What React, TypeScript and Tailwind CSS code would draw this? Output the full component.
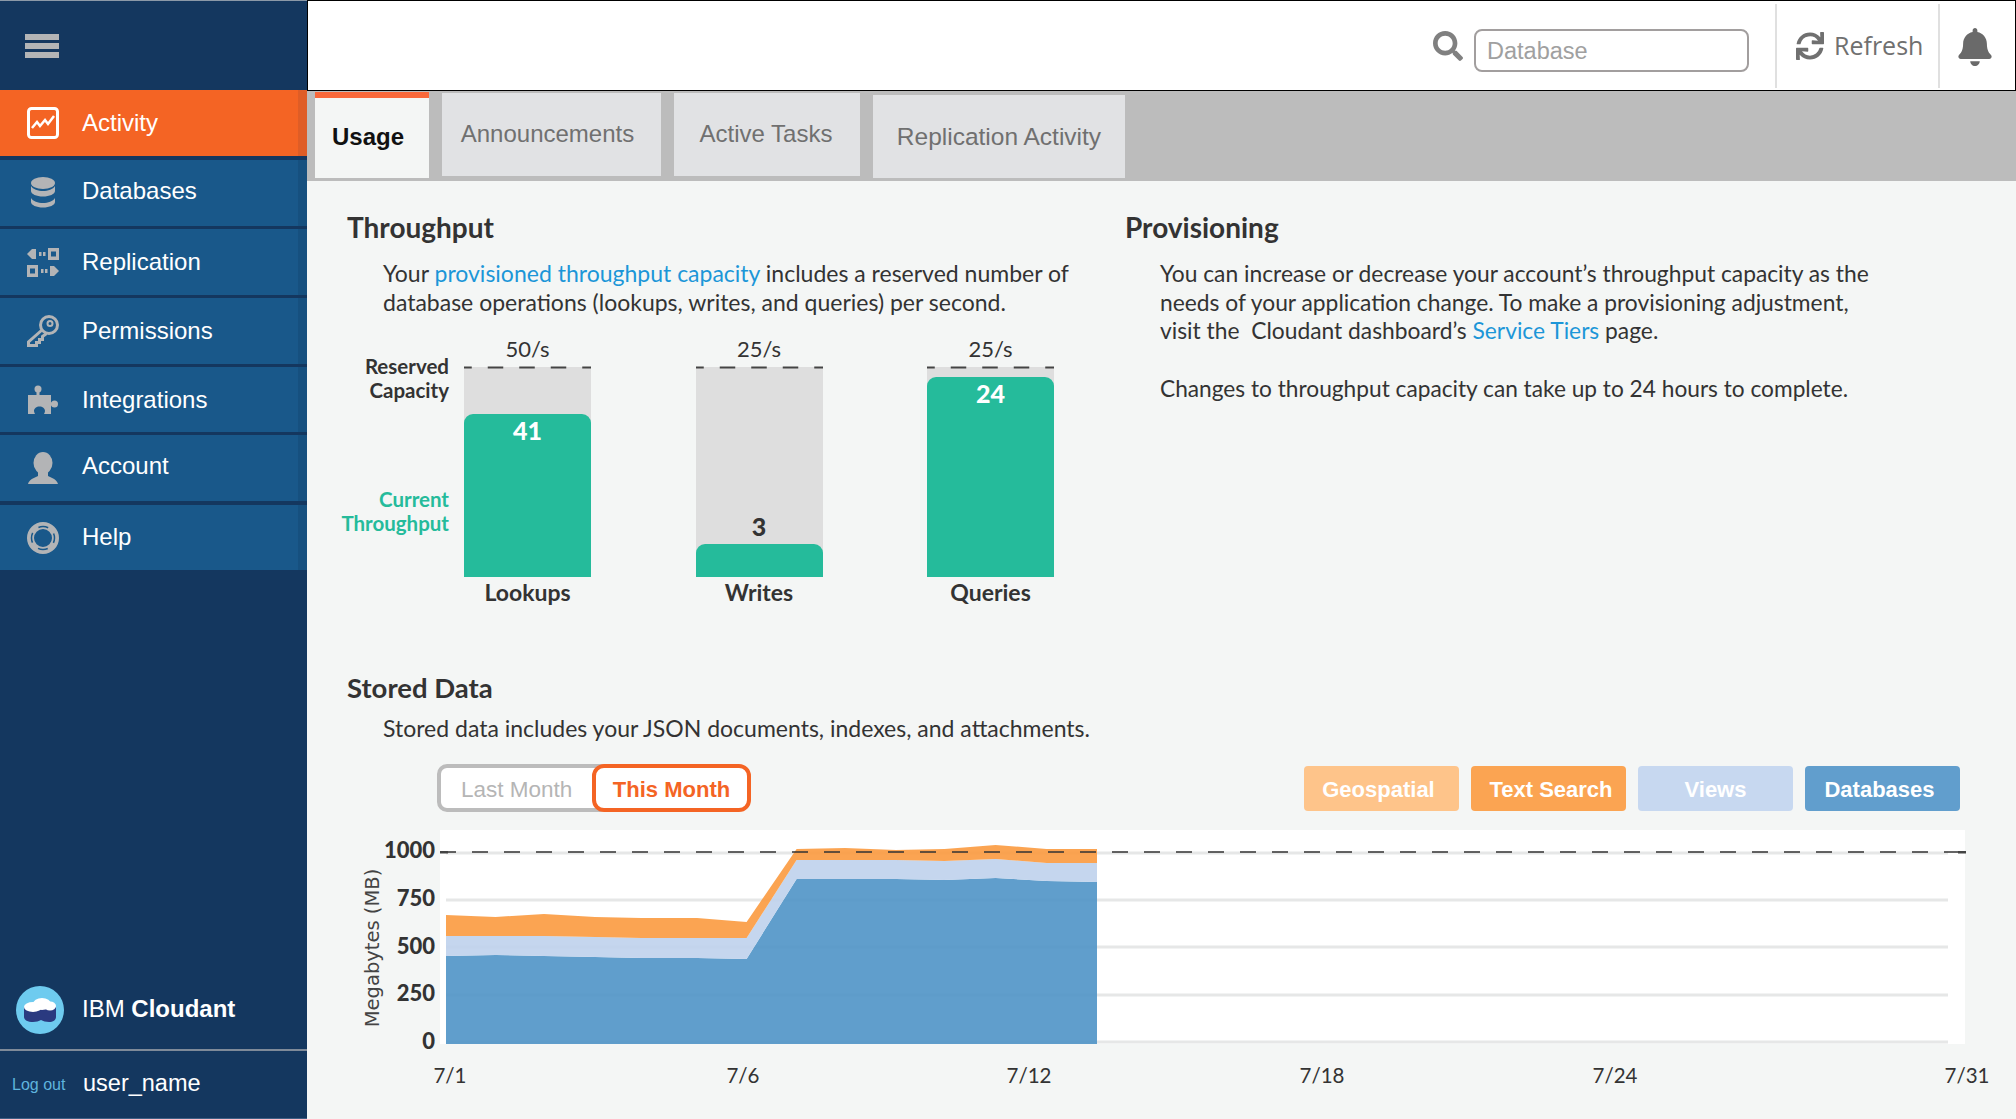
import { FaBell, FaSearch, FaSync } from "react-icons/fa";

const ICON = "#b3b4b6";
const BODY = "font-['Lato',sans-serif]";

function ActivityIcon() {
  return (
    <svg width="32" height="32" viewBox="0 0 32 32" fill="none" stroke="#fff">
      <rect x="1.5" y="1.5" width="29" height="29" rx="3" strokeWidth="3" />
      <path d="M5 21l5-6 3 4 5-6 3 4 6-8" strokeWidth="2.5" />
    </svg>
  );
}

function DatabaseIcon() {
  return (
    <svg width="26" height="32" viewBox="0 0 26 32" fill={ICON}>
      <ellipse cx="13" cy="6" rx="12" ry="6" />
      <path d="M1 9c2 3.5 7 5 12 5s10-1.500 12-5v5c0 3-5.500 5.500-12 5.500S1 17 1 14z" />
      <path d="M1 17c2 3.500 7 5 12 5s10-1.500 12-5v4c0 3-5.500 5.500-12 5.500S1 24 1 21z" transform="translate(0 4)" />
    </svg>
  );
}

function ReplicationIcon() {
  return (
    <svg width="32" height="29" viewBox="0 0 32 29" fill={ICON}>
      <path d="M0 6l5-5h4v10H5z" />
      <rect x="12" y="4" width="2.500" height="4" />
      <rect x="16" y="4" width="2.500" height="4" />
      <path fillRule="evenodd" d="M21 0h11v12H21zM24 3.500v5h5v-5z" />
      <path fillRule="evenodd" d="M0 17h11v12H0zM3 20.500v5h5v-5z" />
      <rect x="14" y="21" width="2.500" height="4" />
      <rect x="18" y="21" width="2.500" height="4" />
      <path d="M32 23l-5 5h-4V18h4z" />
    </svg>
  );
}

function KeyIcon() {
  return (
    <svg width="32" height="32" viewBox="0 0 32 32" fill="none" stroke={ICON}>
      <circle cx="22" cy="10" r="8.500" strokeWidth="3" />
      <circle cx="23" cy="8.500" r="2.500" strokeWidth="2" />
      <path d="M15 15L1.500 27v3.500h8v-3h3v-3h3v-3l4-3" strokeWidth="3" />
    </svg>
  );
}

function PuzzleIcon() {
  return (
    <svg width="30" height="30" viewBox="0 0 30 30" fill={ICON}>
      <circle cx="10" cy="4" r="3.500" />
      <rect x="8.500" y="6" width="3" height="5" />
      <circle cx="26.500" cy="19" r="3.500" />
      <rect x="21" y="17.500" width="4" height="3" />
      <path d="M0 10h23v19h-7c.5-1 1-2 1-3 0-2.500-2.500-4.500-5.500-4.500S6 23.500 6 26c0 1 .5 2 1 3H0z" />
    </svg>
  );
}

function PersonIcon() {
  return (
    <svg width="30" height="32" viewBox="0 0 30 32" fill={ICON}>
      <ellipse cx="15" cy="11" rx="9.500" ry="11" />
      <path d="M0 32c1-4.500 6-6 10-8v-4h10v4c4 2 9 3.500 10 8z" />
    </svg>
  );
}

function HelpIcon() {
  return (
    <svg width="32" height="32" viewBox="0 0 32 32" fill="none">
      <circle cx="16" cy="16" r="12.500" stroke={ICON} strokeWidth="7" />
      <circle cx="16" cy="16" r="11.500" stroke="#19588a" strokeWidth="1.500" strokeDasharray="10 8.060" strokeDashoffset="5" />
    </svg>
  );
}

const NAV = [
  { label: "Activity", icon: <ActivityIcon />, row: "h-[66px] mb-px bg-[#f46424]", edge: "bg-[#df5d26]", text: "" },
  { label: "Databases", icon: <DatabaseIcon />, row: "h-[66px] bg-[#19588a]", edge: "bg-[#16507f]", text: "pb-[4px]" },
  { label: "Replication", icon: <ReplicationIcon />, row: "h-[66px] bg-[#19588a]", edge: "bg-[#16507f]", text: "" },
  { label: "Permissions", icon: <KeyIcon />, row: "h-[66px] bg-[#19588a]", edge: "bg-[#16507f]", text: "" },
  { label: "Integrations", icon: <PuzzleIcon />, row: "h-[65px] bg-[#19588a]", edge: "bg-[#16507f]", text: "" },
  { label: "Account", icon: <PersonIcon />, row: "h-[66px] mb-px bg-[#19588a]", edge: "bg-[#16507f]", text: "pb-[4px]" },
  { label: "Help", icon: <HelpIcon />, row: "h-[65px] bg-[#19588a]", edge: "bg-[#16507f]", text: "pb-[2px]" },
];

const TABS = [
  { label: "Announcements", cls: "w-[219px] h-[83px] pb-[2px] pr-[8px] mt-px" },
  { label: "Active Tasks", cls: "w-[186px] h-[83px] pb-[2px] pr-[2px] mt-px" },
  { label: "Replication Activity", cls: "w-[252px] h-[83px] pt-[2px] mt-[3px] text-[24.500px]" },
];

const BARS = [
  { name: "Lookups", cap: "50/s", pct: "h-[163px]", value: "41", dark: false },
  { name: "Writes", cap: "25/s", pct: "h-[33px]", value: "3", dark: true },
  { name: "Queries", cap: "25/s", pct: "h-[200px]", value: "24", dark: false },
];

const LEGEND = [
  { label: "Geospatial", cls: "bg-[#fec48a] pr-[6px]" },
  { label: "Text Search", cls: "bg-[#fba452] pl-[5px]" },
  { label: "Views", cls: "bg-[#c7d8f0]" },
  { label: "Databases", cls: "bg-[#619ecd] pr-[6px]" },
];

// stacked area data, x in page px, the rest are tops of each layer
const XS = [446, 495.6, 544, 595, 641, 697, 746.6, 796.6, 845, 896, 944.6, 995.6, 1046.6, 1097];
const ORANGE = [915, 917, 914, 917, 918, 918, 922, 849, 848, 850, 849, 845, 849, 849];
const LIGHT = [936, 936, 936, 937, 938, 938, 938, 860, 860, 860, 861, 859, 863, 863];
const BLUE = [956, 955, 956, 957, 958, 958, 959, 879, 879, 879, 880, 878, 881, 882];

function band(top: number[], bottom: number[]) {
  const a = XS.map((x, i) => `${x},${top[i]}`);
  const b = XS.map((x, i) => `${x},${bottom[i]}`).reverse();
  return [...a, ...b].join(" ");
}

function UsageChart() {
  const floor = XS.map(() => 1044);
  return (
    <svg width="1669" height="274" viewBox="347 830 1669 274" className="block" fontFamily="Lato, sans-serif">
      <rect x="440" y="830" width="1525" height="214" fill="#fff" />
      {[853, 900, 947, 995, 1042].map((y) => (
        <rect key={y} x="446" y={y - 1.5} width="1502" height="3" fill="#e6e7e7" />
      ))}
      <polygon points={band(BLUE, floor)} fill="#4f93c7" fillOpacity="0.9" />
      <polygon points={band(LIGHT, BLUE)} fill="#bfd1ec" fillOpacity="0.9" />
      <polygon points={band(ORANGE, LIGHT)} fill="#fb9a3f" fillOpacity="0.9" />
      <line x1="440" y1="852" x2="1965" y2="852" stroke="#333" strokeWidth="1.500" strokeDasharray="16 16" />
      <rect x="440" y="851" width="8" height="2.500" fill="#444" />
      <rect x="1958" y="851" width="8" height="2.500" fill="#444" />
      {[
        ["1000", 858],
        ["750", 906],
        ["500", 954],
        ["250", 1001],
        ["0", 1049],
      ].map(([t, y]) => (
        <text key={t} x="435" y={y} textAnchor="end" fontSize="22" fontWeight="900" fill="#333">
          {t}
        </text>
      ))}
      <text
        transform="translate(379 948) rotate(-90)"
        textAnchor="middle"
        fontSize="19.500"
        fontFamily="'DejaVu Sans', sans-serif"
        fill="#444"
      >
        Megabytes (MB)
      </text>
      {[
        ["7/1", 450],
        ["7/6", 743],
        ["7/12", 1029],
        ["7/18", 1322],
        ["7/24", 1615],
        ["7/31", 1967],
      ].map(([t, x]) => (
        <text key={t} x={x} y="1083" textAnchor="middle" fontSize="20.500" fill="#333">
          {t}
        </text>
      ))}
    </svg>
  );
}

function DashTop() {
  return (
    <svg width="127" height="3" className="absolute left-0 top-[-1px]">
      <line x1="0" y1="1.500" x2="127" y2="1.500" stroke="#444" strokeWidth="2" strokeDasharray="15.500 16" strokeDashoffset="7.750" />
    </svg>
  );
}

function Sidebar() {
  return (
    <aside className="flex h-full w-[307px] shrink-0 flex-col border-t border-[#8c99a8] bg-[#14375f] font-['Liberation_Sans',sans-serif] text-white">
      <div className="flex h-[89px] shrink-0 items-center pl-[25px]">
        <div className="flex w-[34px] flex-col gap-[3px]">
          <span className="h-[6px] bg-[#b3b4b6]" />
          <span className="h-[6px] bg-[#b3b4b6]" />
          <span className="h-[6px] bg-[#b3b4b6]" />
        </div>
      </div>
      <nav className="flex flex-col gap-[3px]">
        {NAV.map((n) => (
          <div key={n.label} className={`flex items-center ${n.row}`}>
            <span className="flex w-[82px] shrink-0 justify-center pl-[4px]">{n.icon}</span>
            <span className={`flex-1 text-[24px] ${n.text}`}>{n.label}</span>
            <span className={`w-[9px] self-stretch ${n.edge}`} />
          </div>
        ))}
      </nav>
      <div className="mt-auto flex h-[80px] items-center border-b-2 border-[#7f8a99]">
        <svg width="50" height="48" viewBox="0 0 50 48" className="ml-[15px]">
          <circle cx="25" cy="24" r="24" fill="#6ecbef" />
          <path d="M9 21h32v10c0 3-3 5-7 5-3 0-6-1-8-2-2 1-5 2-8 2-5 0-9-2-9-5z" fill="#2a3a80" />
          <ellipse cx="18" cy="21" rx="9" ry="5" fill="#fff" />
          <ellipse cx="27" cy="18" rx="9" ry="6" fill="#fff" />
          <ellipse cx="35" cy="20" rx="6" ry="4.500" fill="#fff" />
        </svg>
        <span className="ml-[17px] pb-[2px] text-[24px]">
          IBM <b>Cloudant</b>
        </span>
      </div>
      <div className="flex h-[68px] items-center border-b border-[#3f5f85]">
        <span className="ml-[12px] w-[71px] text-[16px] text-[#5fb4dd]">Log out</span>
        <span className="pb-[2px] text-[23.500px]">user_name</span>
      </div>
    </aside>
  );
}

function Header() {
  return (
    <header className="flex h-[91px] shrink-0 items-center justify-end border border-black bg-white font-['Liberation_Sans',sans-serif]">
      <FaSearch className="mr-[11px] text-[30px] text-[#808080]" />
      <input
        placeholder="Database"
        className="mt-[9px] h-[43px] w-[275px] rounded-[8px] border-2 border-[#a29e9e] px-[11px] pt-[3px] text-[23.500px] placeholder:text-[#a0a0a0]"
      />
      <div className="ml-[26px] flex h-[84px] w-[165px] items-center gap-[10px] border-x-2 border-[#e0e0e0] pl-[19px] font-['Open_Sans',sans-serif] text-[25px] text-[#707070]">
        <FaSync className="shrink-0 text-[28px]" />
        <span>Refresh</span>
      </div>
      <div className="flex w-[75px] justify-center pr-[5px] pt-[2px]">
        <FaBell className="text-[38px] text-[#6a6a6a]" />
      </div>
    </header>
  );
}

function Tabs() {
  return (
    <div className="flex h-[90px] shrink-0 gap-[13px] bg-[#bcbcbc] pl-[8px] pt-[1px] font-['Liberation_Sans',sans-serif] text-[24px]">
      <div className="flex h-[86px] w-[114px] items-center justify-center border-t-[6px] border-[#f9683a] bg-[#f4f6f5] pb-[3px] pr-[8px] font-bold text-[#111]">
        Usage
      </div>
      {TABS.map((t) => (
        <div key={t.label} className={`flex items-center justify-center bg-[#e1e2e4] text-[#707070] ${t.cls}`}>
          {t.label}
        </div>
      ))}
    </div>
  );
}

function Throughput() {
  return (
    <section>
      <h2 className="h-[32px] text-[28px] font-bold leading-[32px]">Throughput</h2>
      <p className="ml-[36px] mt-[16px] text-[23px] leading-[29px]">
        Your <span className="text-[#1c96d8]">provisioned throughput capacity</span> includes a reserved number of
        <br />
        database operations (lookups, writes, and queries) per second.
      </p>
      <div className="mt-[18px] flex">
        <div className="relative h-[272px] w-[102px] text-right text-[20.500px] font-bold leading-[24px]">
          <div className="absolute right-0 top-[19px] w-[140px]">
            Reserved
            <br />
            Capacity
          </div>
          <div className="absolute right-0 top-[152px] w-[140px] text-[#25bb9b]">
            Current
            <br />
            Throughput
          </div>
        </div>
        <div className="ml-[15px] flex gap-[104.500px]">
          {BARS.map((b) => (
            <div key={b.name} className="flex w-[127px] flex-col items-center">
              <div className="h-[32px] text-[22px] leading-[28px]">{b.cap}</div>
              <div className="relative flex h-[210px] w-full flex-col justify-end bg-[#dedede]">
                <DashTop />
                {b.dark && <div className="mb-[3px] text-center text-[25px] font-black leading-[30px]">{b.value}</div>}
                <div className={`rounded-t-[9px] bg-[#25bb9b] text-center text-[25px] font-black leading-[30px] text-white ${b.pct}`}>
                  {!b.dark && <div className="pt-[1px]">{b.value}</div>}
                </div>
              </div>
              <div className="mt-[1px] text-[23px] font-bold leading-[28px]">{b.name}</div>
            </div>
          ))}
        </div>
      </div>
    </section>
  );
}

function Provisioning() {
  return (
    <section>
      <h2 className="h-[32px] text-[28px] font-bold leading-[32px]">Provisioning</h2>
      <p className="ml-[35px] mt-[16px] text-[22.800px] leading-[28.500px]">
        You can increase or decrease your account’s throughput capacity as the
        <br />
        needs of your application change. To make a provisioning adjustment,
        <br />
        visit the&nbsp; Cloudant dashboard’s <span className="text-[#1c96d8]">Service Tiers</span> page.
      </p>
      <p className="ml-[35px] mt-[29px] text-[22.700px] leading-[29px]">
        Changes to throughput capacity can take up to 24 hours to complete.
      </p>
    </section>
  );
}

function StoredData() {
  return (
    <section className="mt-[65px]">
      <h2 className="h-[32px] text-[27.500px] font-bold leading-[32px]">Stored Data</h2>
      <p className="ml-[36px] mt-[10px] text-[23px] leading-[29px]">
        Stored data includes your JSON documents, indexes, and attachments.
      </p>
      <div className="ml-[90px] mt-[21px] flex h-[48px] w-[1523px] items-center justify-between font-['Liberation_Sans',sans-serif] text-[22px]">
        <div className="flex h-[48px]">
          <div className="flex w-[173px] items-center rounded-[10px] border-[4px] border-[#bcbcbc] bg-white pl-[20px] pt-[3px] text-[22.500px] text-[#b5b5b5]">
            Last Month
          </div>
          <div className="relative -ml-[18px] flex w-[159px] items-center justify-center rounded-[12px] border-[4px] border-[#f46424] bg-white pt-[3px] font-bold text-[#f46424]">
            This Month
          </div>
        </div>
        <div className="flex gap-[12px]">
          {LEGEND.map((l) => (
            <div key={l.label} className={`flex h-[45px] w-[155px] items-center justify-center rounded-[4px] pt-[2px] font-bold text-white ${l.cls}`}>
              {l.label}
            </div>
          ))}
        </div>
      </div>
      <div className="mt-[18px]">
        <UsageChart />
      </div>
    </section>
  );
}

export default function App() {
  return (
    <div className="flex h-[1119px] w-[2016px] overflow-hidden bg-[#f4f6f5]">
      <Sidebar />
      <main className="flex min-w-0 flex-1 flex-col">
        <Header />
        <Tabs />
        <div className={`pl-[40px] pt-[30px] text-[#333] ${BODY}`}>
          <div className="grid grid-cols-[778px_1fr]">
            <Throughput />
            <Provisioning />
          </div>
          <StoredData />
        </div>
      </main>
    </div>
  );
}
